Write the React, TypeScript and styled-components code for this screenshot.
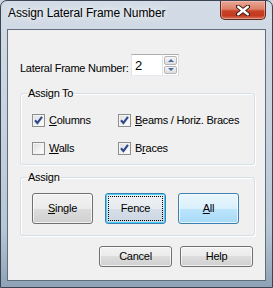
import React from "react";
import styled, { createGlobalStyle, css } from "styled-components";

const GlobalStyle = createGlobalStyle`
  html, body {
    margin: 0;
    padding: 0;
    background: #c9d4e0;
  }
  * {
    box-sizing: border-box;
  }
`;

const FONT = `"Liberation Sans", Arial, sans-serif`;

export default function App() {
  return (
    <>
      <GlobalStyle />
      <Window>
        <TitleBar>
          <Caption>Assign Lateral Frame Number</Caption>
          <CloseButton aria-label="Close">
            <svg width="14" height="11" viewBox="0 0 14 11">
              <path
                d="M2 1.5 L12 9.5 M12 1.5 L2 9.5"
                stroke="#3b1a14"
                strokeWidth="4.2"
                strokeLinecap="round"
              />
              <path
                d="M2.2 1.7 L11.8 9.3 M11.8 1.7 L2.2 9.3"
                stroke="#ffffff"
                strokeWidth="2.4"
                strokeLinecap="round"
              />
            </svg>
          </CloseButton>
        </TitleBar>

        <Client>
          <NumberRow>
            <FieldLabel>Lateral Frame Number:</FieldLabel>
            <SpinBox>
              <SpinInput>2</SpinInput>
              <SpinButtons>
                <SpinButton>
                  <Arrow $up />
                </SpinButton>
                <SpinButton>
                  <Arrow />
                </SpinButton>
              </SpinButtons>
            </SpinBox>
          </NumberRow>

          <GroupBox>
            <Legend>Assign To</Legend>
            <CheckGrid>
              <CheckItem checked mnemonic="C" rest="olumns" />
              <CheckItem checked mnemonic="B" rest="eams / Horiz. Braces" />
              <CheckItem mnemonic="W" rest="alls" />
              <CheckItem checked before="B" mnemonic="r" rest="aces" />
            </CheckGrid>
          </GroupBox>

          <GroupBox $assign>
            <Legend>Assign</Legend>
            <AssignRow>
              <PushButton $tall>
                <u>S</u>ingle
              </PushButton>
              <PushButton $tall $variant="focused">
                Fence
              </PushButton>
              <PushButton $tall $variant="hot">
                <u>A</u>ll
              </PushButton>
            </AssignRow>
          </GroupBox>

          <FooterRow>
            <PushButton $wide>Cancel</PushButton>
            <PushButton $wide>Help</PushButton>
          </FooterRow>
        </Client>
      </Window>
    </>
  );
}

interface CheckItemProps {
  checked?: boolean;
  before?: string;
  mnemonic: string;
  rest: string;
}

function CheckItem({ checked, before, mnemonic, rest }: CheckItemProps) {
  return (
    <CheckRow>
      <CheckBox>
        {checked && (
          <svg width="11" height="11" viewBox="0 0 11 11">
            <path
              d="M2 5.2 L4.4 8 L9 1.8"
              fill="none"
              stroke="#2f4a8a"
              strokeWidth="2.1"
            />
          </svg>
        )}
      </CheckBox>
      <CheckText>
        {before}
        <u>{mnemonic}</u>
        {rest}
      </CheckText>
    </CheckRow>
  );
}

const Window = styled.div`
  width: 273px;
  height: 288px;
  display: flex;
  flex-direction: column;
  padding: 0 6px 6px 6px;
  border: 1px solid #3a4452;
  border-radius: 7px 7px 0 0;
  background: linear-gradient(
    180deg,
    #d3dce6 0%,
    #c8d3df 40%,
    #b7c6d5 80%,
    #8fa2b6 100%
  );
  font-family: ${FONT};
`;

const TitleBar = styled.div`
  height: 28px;
  display: flex;
  justify-content: space-between;
  align-items: flex-start;
`;

const Caption = styled.div`
  padding: 5px 0 0 1px;
  font-size: 12px;
  line-height: 15px;
  letter-spacing: -0.1px;
  color: #000;
  text-shadow: 0 0 6px rgba(255, 255, 255, 0.9),
    0 0 10px rgba(255, 255, 255, 0.7);
`;

const CloseButton = styled.div`
  width: 46px;
  height: 19px;
  display: flex;
  align-items: center;
  justify-content: center;
  border: 1px solid #5b2a22;
  border-top: none;
  border-radius: 0 0 5px 5px;
  background: linear-gradient(
    180deg,
    #e8a797 0%,
    #dd8168 45%,
    #c8432a 55%,
    #c4381d 80%,
    #d7735c 100%
  );
  box-shadow: inset 0 0 0 1px rgba(255, 210, 200, 0.45);
`;

const Client = styled.div`
  flex: 1;
  display: flex;
  flex-direction: column;
  padding: 0 10px 0 12px;
  border: 1px solid #5d6d7e;
  background: #f0f0f0;
  font-size: 11px;
  line-height: 13px;
  letter-spacing: -0.25px;
  color: #000;
`;

const NumberRow = styled.div`
  display: flex;
  align-items: flex-end;
  margin-top: 24px;
`;

const FieldLabel = styled.div`
  width: 111px;
  padding-bottom: 1px;
`;

const SpinBox = styled.div`
  display: flex;
  height: 22px;
`;

const SpinInput = styled.div`
  width: 31px;
  height: 22px;
  padding: 3px 0 0 3px;
  border: 1px solid #abadb3;
  border-right: none;
  border-color: #abadb3 #dbdfe6 #e3e9ef #e2e3ea;
  background: #fff;
  font-size: 13px;
  line-height: 15px;
  letter-spacing: 0;
`;

const SpinButtons = styled.div`
  width: 17px;
  display: flex;
  flex-direction: column;
  padding: 1px;
  gap: 1px;
  border: 1px solid #abadb3;
  border-color: #abadb3 #dbdfe6 #e3e9ef #e2e3ea;
  background: #fff;
`;

const SpinButton = styled.div`
  flex: 1;
  display: flex;
  align-items: center;
  justify-content: center;
  border: 1px solid #b5b5b5;
  border-radius: 2px;
  background: linear-gradient(180deg, #f6f6f6 0%, #e9e9e9 50%, #dcdcdc 100%);
`;

const Arrow = styled.span<{ $up?: boolean }>`
  width: 0;
  height: 0;
  border-left: 3px solid transparent;
  border-right: 3px solid transparent;
  ${(p) =>
    p.$up
      ? css`
          border-bottom: 3px solid #4d6aa8;
        `
      : css`
          border-top: 3px solid #4d6aa8;
        `}
`;

const GroupBox = styled.fieldset<{ $assign?: boolean }>`
  margin: ${(p) => (p.$assign ? "6px 0 0" : "11px 0 0")};
  padding: ${(p) => (p.$assign ? "9px 11px 11px" : "14px 11px 9px")};
  border: 1px solid #d5dfe5;
  border-radius: 3px;
  box-shadow: inset 1px 1px 0 #fff, 1px 1px 0 #fff;
  min-width: 0;
`;

const Legend = styled.legend`
  padding: 0 1px;
  margin-left: -5px;
  line-height: 13px;
`;

const CheckGrid = styled.div`
  display: grid;
  grid-template-columns: 86px auto;
  row-gap: 15px;
`;

const CheckRow = styled.div`
  display: flex;
  align-items: center;
  height: 13px;
`;

const CheckBox = styled.span`
  width: 13px;
  height: 13px;
  display: flex;
  align-items: center;
  justify-content: center;
  border: 1px solid #8e8f8f;
  background: linear-gradient(135deg, #dcdcdc 0%, #f0f0f0 50%, #ffffff 100%);
  box-shadow: inset 0 0 0 1px #f4f4f4;
`;

const CheckText = styled.span`
  margin-left: 4px;
`;

const AssignRow = styled.div`
  display: flex;
  gap: 12px;
`;

const FooterRow = styled.div`
  display: flex;
  justify-content: flex-end;
  gap: 8px;
  margin-top: 10px;
  padding-right: 2px;
`;

type Variant = "normal" | "focused" | "hot";

const variants: Record<Variant, ReturnType<typeof css>> = {
  normal: css`
    border-color: #707070;
    background: linear-gradient(
      180deg,
      #f2f2f2 0%,
      #ebebeb 50%,
      #dddddd 50%,
      #cfcfcf 100%
    );
  `,
  focused: css`
    border-color: #3c7fb1;
    background: linear-gradient(
      180deg,
      #eef1f4 0%,
      #e6ebf0 50%,
      #d6dfe8 50%,
      #cbd6e1 100%
    );
    box-shadow: inset 0 0 0 1px #48d2f8;
    &::after {
      content: "";
      position: absolute;
      inset: 2px;
      border: 1px dotted #000;
      border-radius: 1px;
    }
  `,
  hot: css`
    border-color: #3c7fb1;
    background: linear-gradient(
      180deg,
      #eaf6fd 0%,
      #d9f0fc 50%,
      #bee6fd 50%,
      #a7d9f5 100%
    );
  `,
};

const PushButton = styled.div<{
  $variant?: Variant;
  $tall?: boolean;
  $wide?: boolean;
}>`
  position: relative;
  display: flex;
  align-items: center;
  justify-content: center;
  width: ${(p) => (p.$wide ? "73px" : "61px")};
  height: ${(p) => (p.$tall ? "31px" : "21px")};
  border: 1px solid;
  border-radius: 3px;
  box-shadow: inset 0 0 0 1px rgba(255, 255, 255, 0.7);
  font-size: 11px;
  ${(p) => variants[p.$variant ?? "normal"]}
`;
